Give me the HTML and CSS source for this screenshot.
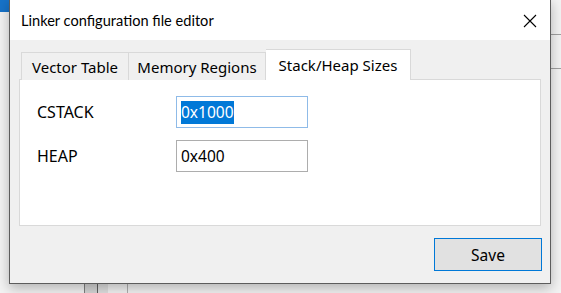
FILE: index.html
```html
<!DOCTYPE html>
<html>
<head>
  <meta charset="UTF-8">
  <title>Linker configuration file editor</title>
  <link rel="stylesheet" href="styles.css">
</head>
<body>

  <div class="desk">
    <div class="desk-blue"></div>
    <div class="desk-line h1"></div>
    <div class="desk-line h2"></div>
    <div class="desk-col c1"></div>
    <div class="desk-col c2"></div>
    <div class="desk-col c3"></div>

    <div class="dialog">
      <div class="titlebar">
        <span class="title">Linker configuration file editor</span>
        <svg class="close" width="14" height="14" viewBox="0 0 14 14">
          <path d="M1 1 L13 13 M13 1 L1 13" stroke="#000" stroke-width="1.1" fill="none"/>
        </svg>
      </div>

      <div class="client">
        <div class="tabs">
          <div class="tab vt">Vector Table</div>
          <div class="tab mr">Memory Regions</div>
          <div class="tab active">Stack/Heap Sizes</div>
        </div>
        <div class="panel">
          <div class="row">
            <div class="label">CSTACK</div>
            <div class="field focus"><span class="sel">0x1000</span></div>
          </div>
          <div class="row">
            <div class="label">HEAP</div>
            <div class="field">0x400</div>
          </div>
        </div>
        <div class="footer">
          <button type="button" class="btn">Save</button>
        </div>
      </div>
    </div>
  </div>

</body>
</html>
```

FILE: styles.css
```css
* { box-sizing:border-box; }
body { margin:0; font-family:"Noto Sans", "Open Sans", sans-serif; color:#000; }

.desk { position:relative; width:561px; height:293px; overflow:hidden; background:#f3f3f3; }
.desk-blue { position:absolute; left:0; top:0; width:12px; height:12px; background:#1773c9; }
.desk-line { position:absolute; left:540px; width:30px; height:1px; background:#a0a0a0; }
.desk-line.h1 { top:34px; }
.desk-line.h2 { top:68px; }
.desk-col { position:absolute; top:270px; height:30px; width:1px; background:#8a8a8a; }
.desk-col.c1 { left:84px; width:14px; background:#d6d6d6; border-left:1px solid #808080; border-right:1px solid #606060; }
.desk-col.c2 { left:98px; width:10px; background:#e0e0e0; }
.desk-col.c3 { left:127px; background:#b0b0b0; }

.dialog { position:absolute; left:9px; top:-1px; width:542px; height:285px; border:1px solid #5c5c5c; background:#f0f0f0; display:flex; flex-direction:column; box-shadow:0 4px 12px rgba(0,0,0,0.28); }

.titlebar { height:40px; flex:none; background:#fff; display:flex; align-items:center; padding:1px 0 0 11px; }
.title { font-family:Lato, "Noto Sans", sans-serif; font-size:14.6px; flex:1; }
.close { margin-right:13px; }

.client { flex:1; display:flex; flex-direction:column; padding:9px 9px 0 9px; }

.tabs { display:flex; align-items:flex-end; height:31px; padding-left:2px; margin-bottom:-1px; position:relative; z-index:1; }
.tab { height:28px; border:1px solid #d9d9d9; border-right:none; border-bottom:none; background:#f0f0f0; font-size:15px; display:flex; align-items:center; justify-content:center; }
.tab.vt { width:107px; }
.tab.mr { width:138px; border-right:1px solid #d9d9d9; }
.tab.active { width:145px; height:31px; background:#fff; border-right:1px solid #d9d9d9; border-left:none; padding-bottom:1px; }

.panel { height:147px; width:522px; background:#fff; border:1px solid #d9d9d9; padding:16px 0 0 17px; display:flex; flex-direction:column; gap:12px; }
.row { display:flex; align-items:center; }
.label { width:139px; font-size:16px; }
.field { width:132px; height:32px; border:1px solid #adadad; padding:0 4px; font-size:15.5px; display:flex; align-items:center; }
.field.focus { border-color:#8fbbe8; }
.sel { background:#0078d7; color:#fff; padding:0 0 1px 0; }

.footer { display:flex; justify-content:flex-end; padding:12px 0 0 0; margin-right:-1px; }
.btn { width:108px; height:33px; border:1px solid #0078d7; background:#e1e1e1; font-family:inherit; font-size:15.5px; color:#000; }
```
